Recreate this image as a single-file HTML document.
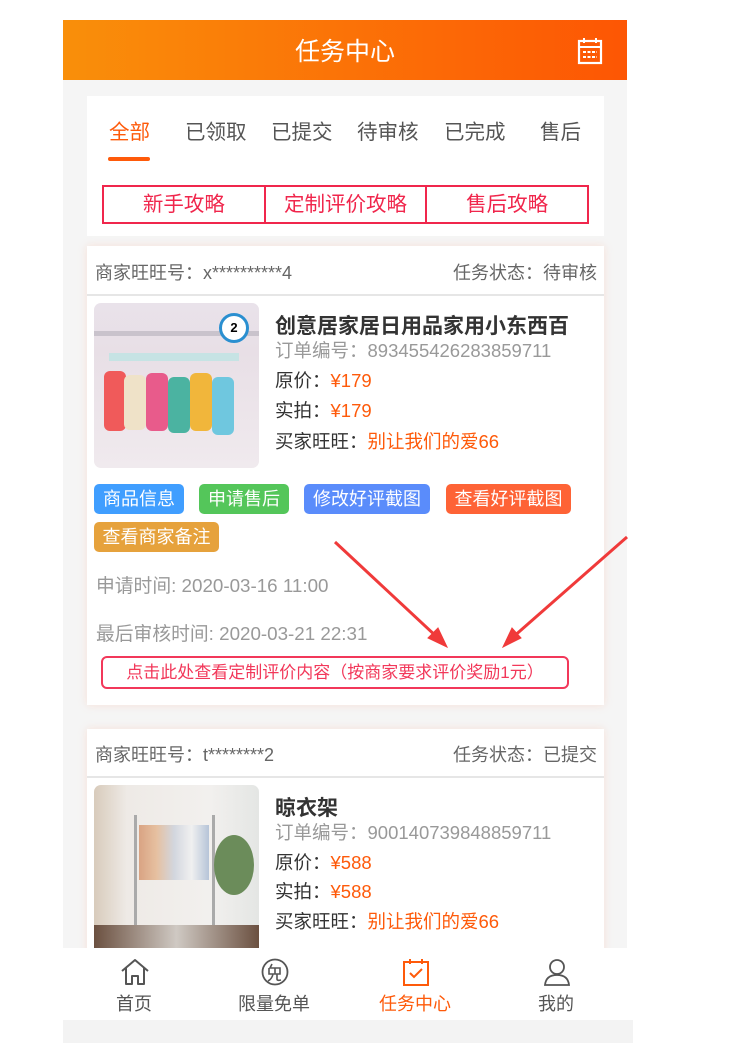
<!DOCTYPE html>
<html><head><meta charset="utf-8"><style>
*{margin:0;padding:0;box-sizing:border-box}
body{width:737px;height:1043px;background:#fff;position:relative;overflow:hidden;font-family:"Liberation Sans","Noto Sans CJK SC",sans-serif}
.a{position:absolute;white-space:nowrap}
.phone{position:absolute;left:63px;top:20px;width:564px;height:1023px;background:#f5f5f5}
.hdr{position:absolute;left:63px;top:20px;width:564px;height:60px;background:linear-gradient(90deg,#f98f0a,#fd5604)}
.card{position:absolute;left:87px;width:517px;background:#fff;box-shadow:0 0 8px rgba(250,200,180,.45)}
.btn{position:absolute;height:30px;line-height:30px;color:#fff;font-size:18px;border-radius:5px;text-align:center}
.t{font-size:18px;color:#666}
.l{font-size:18.5px;color:#333}
.g{color:#999}.o{color:#fe5a0a}
</style></head><body>
<div class="phone"></div>
<div class="a" style="left:63px;top:1020px;width:570px;height:23px;background:#f3f3f3"></div>
<div class="hdr"></div>
<div class="a" style="left:63px;top:32px;width:564px;text-align:center;color:#fff;font-size:25px">任务中心</div>
<svg class="a" style="left:577px;top:37px" width="26" height="28" viewBox="0 0 26 28"><rect x="2" y="4" width="22" height="22" fill="none" stroke="#fff" stroke-width="2.2"/><line x1="2" y1="10" x2="24" y2="10" stroke="#fff" stroke-width="2"/><line x1="7" y1="1" x2="7" y2="6" stroke="#fff" stroke-width="2"/><line x1="19" y1="1" x2="19" y2="6" stroke="#fff" stroke-width="2"/><line x1="6" y1="15" x2="20" y2="15" stroke="#fff" stroke-width="2" stroke-dasharray="3 1.5"/><line x1="6" y1="20" x2="20" y2="20" stroke="#fff" stroke-width="2" stroke-dasharray="3 1.5"/></svg>

<div class="a" style="left:87px;top:96px;width:517px;height:140px;background:#fff"></div>
<div class="a" style="top:115px;left:109px;font-size:20.5px;color:#fe5a0a">全部</div>
<div class="a" style="top:115px;left:185px;font-size:20.5px;color:#555">已领取</div>
<div class="a" style="top:115px;left:271px;font-size:20.5px;color:#555">已提交</div>
<div class="a" style="top:115px;left:357px;font-size:20.5px;color:#555">待审核</div>
<div class="a" style="top:115px;left:444px;font-size:20.5px;color:#555">已完成</div>
<div class="a" style="top:115px;left:540px;font-size:20.5px;color:#555">售后</div>
<div class="a" style="left:108px;top:157px;width:42px;height:4px;border-radius:2px;background:#fe5a0a"></div>
<div class="a" style="left:102px;top:185px;width:487px;height:39px;border:2px solid #f0264c;display:flex">
<div style="flex:1;text-align:center;line-height:35px;font-size:20.5px;color:#f0264c;border-right:2px solid #f0264c">新手攻略</div>
<div style="flex:1;text-align:center;line-height:35px;font-size:20.5px;color:#f0264c;border-right:2px solid #f0264c">定制评价攻略</div>
<div style="flex:1;text-align:center;line-height:35px;font-size:20.5px;color:#f0264c">售后攻略</div></div>

<div class="card" style="top:246px;height:459px"></div>
<div class="a t" style="left:95px;top:259px">商家旺旺号：x**********4</div>
<div class="a t" style="left:453px;top:259px">任务状态：待审核</div>
<div class="a" style="left:87px;top:294px;width:517px;height:2px;background:#e6e6e6"></div>
<div class="a" style="left:94px;top:303px;width:165px;height:165px;border-radius:7px;overflow:hidden;background:linear-gradient(180deg,#e9e2ea 0%,#e8dfe6 30%,#f0eaee 100%)">
<div class="a" style="left:0;top:28px;width:165px;height:5px;background:#c9c3cc"></div>
<div class="a" style="left:15px;top:50px;width:130px;height:8px;background:#c6e3e4"></div>
<div class="a" style="left:10px;top:68px;width:22px;height:60px;background:#f05a5a;border-radius:6px"></div>
<div class="a" style="left:30px;top:72px;width:22px;height:55px;background:#efe2c8;border-radius:6px"></div>
<div class="a" style="left:52px;top:70px;width:22px;height:58px;background:#e85b8b;border-radius:6px"></div>
<div class="a" style="left:74px;top:74px;width:22px;height:56px;background:#4bb3a1;border-radius:6px"></div>
<div class="a" style="left:96px;top:70px;width:22px;height:58px;background:#f1b63b;border-radius:6px"></div>
<div class="a" style="left:118px;top:74px;width:22px;height:58px;background:#6fc7df;border-radius:6px"></div>
<div class="a" style="left:125px;top:10px;width:30px;height:30px;border-radius:50%;border:3px solid #2a8fd0;background:#fff;font-size:13px;font-weight:bold;text-align:center;line-height:24px">2</div>
</div>
<div class="a" style="left:275px;top:310px;font-size:21px;font-weight:bold;color:#333">创意居家居日用品家用小东西百</div>
<div class="a l g" style="left:275px;top:337px">订单编号：893455426283859711</div>
<div class="a l" style="left:275px;top:367px">原价：<span class="o">¥179</span></div>
<div class="a l" style="left:275px;top:397px">实拍：<span class="o">¥179</span></div>
<div class="a l" style="left:275px;top:428px">买家旺旺：<span class="o">别让我们的爱66</span></div>
<div class="btn" style="left:94px;top:484px;width:90px;background:#409eff">商品信息</div>
<div class="btn" style="left:199px;top:484px;width:90px;background:#54c65a">申请售后</div>
<div class="btn" style="left:304px;top:484px;width:126px;background:#5a8cfb">修改好评截图</div>
<div class="btn" style="left:446px;top:484px;width:125px;background:#fe6336">查看好评截图</div>
<div class="btn" style="left:94px;top:522px;width:125px;background:#e6a23c">查看商家备注</div>
<div class="a t g" style="left:96px;top:571px;font-size:18.8px">申请时间: 2020-03-16 11:00</div>
<div class="a t g" style="left:96px;top:619px;font-size:18.8px">最后审核时间: 2020-03-21 22:31</div>
<div class="a" style="left:101px;top:656px;width:468px;height:33px;border:2px solid #f2385a;border-radius:6px;text-align:center;line-height:29px;font-size:17px;color:#f2385a">点击此处查看定制评价内容（按商家要求评价奖励1元）</div>

<div class="card" style="top:729px;height:230px"></div>
<div class="a t" style="left:95px;top:741px">商家旺旺号：t********2</div>
<div class="a t" style="left:453px;top:741px">任务状态：已提交</div>
<div class="a" style="left:87px;top:776px;width:517px;height:2px;background:#e6e6e6"></div>
<div class="a" style="left:94px;top:785px;width:165px;height:170px;border-radius:7px;overflow:hidden;background:linear-gradient(90deg,#d8cbbb 0%,#eeeae6 20%,#f2f0ee 70%,#e4e6e4 100%)">
<div class="a" style="left:40px;top:30px;width:3px;height:120px;background:#aaa"></div>
<div class="a" style="left:118px;top:30px;width:3px;height:120px;background:#aaa"></div>
<div class="a" style="left:45px;top:40px;width:70px;height:55px;background:linear-gradient(90deg,#d9a383,#e6c0a0,#d2d6de,#f0f0f0,#b6c4d8)"></div>
<div class="a" style="left:120px;top:50px;width:40px;height:60px;background:#6b8c5a;border-radius:50%"></div>
<div class="a" style="left:0;top:140px;width:165px;height:30px;background:linear-gradient(90deg,#6b5040,#cfc9c3,#6b5040)"></div>
</div>
<div class="a" style="left:275px;top:792px;font-size:21px;font-weight:bold;color:#333">晾衣架</div>
<div class="a l g" style="left:275px;top:819px">订单编号：900140739848859711</div>
<div class="a l" style="left:275px;top:849px">原价：<span class="o">¥588</span></div>
<div class="a l" style="left:275px;top:878px">实拍：<span class="o">¥588</span></div>
<div class="a l" style="left:275px;top:908px">买家旺旺：<span class="o">别让我们的爱66</span></div>

<svg class="a" style="left:0;top:0" width="737" height="1043"><g fill="#f03a3a" stroke="#f03a3a"><line x1="335" y1="542" x2="438" y2="638" stroke-width="3"/><polygon points="447,647 428,638 438,628"/><line x1="627" y1="537" x2="512" y2="638" stroke-width="3"/><polygon points="503,647 512,628 521,638"/></g></svg>

<div class="a" style="left:63px;top:948px;width:564px;height:72px;background:#fff"></div>
<svg class="a" style="left:120px;top:958px" width="30" height="28" viewBox="0 0 30 28"><path d="M2 13 L15 2 L28 13 M6 10 V26 H12 V18 H18 V26 H24 V10" fill="none" stroke="#555" stroke-width="2" stroke-linejoin="round"/></svg>
<svg class="a" style="left:261px;top:958px" width="28" height="28" viewBox="0 0 28 28"><circle cx="14" cy="14" r="12.5" fill="none" stroke="#555" stroke-width="1.8"/><path d="M11 6 L9 10 H19 V16 H8 V10 M14 10 V16 M12 16 Q11 21 7 23 M16 16 V21 Q16 23 20 22" fill="none" stroke="#555" stroke-width="1.6"/></svg>
<svg class="a" style="left:402px;top:958px" width="28" height="28" viewBox="0 0 28 28"><rect x="2" y="4" width="24" height="23" fill="none" stroke="#fe5a0a" stroke-width="2"/><path d="M8 1 V6 M20 1 V6 M12 4 H16" stroke="#fe5a0a" stroke-width="2"/><path d="M8 15 L12 19 L20 11" fill="none" stroke="#fe5a0a" stroke-width="2"/></svg>
<svg class="a" style="left:543px;top:958px" width="28" height="28" viewBox="0 0 28 28"><circle cx="14" cy="9" r="7" fill="none" stroke="#555" stroke-width="1.8"/><path d="M2 27 Q3 17 14 17 Q25 17 26 27 Z" fill="none" stroke="#555" stroke-width="1.8"/></svg>
<div class="a" style="left:104px;top:990px;width:60px;text-align:center;font-size:18px;color:#555">首页</div>
<div class="a" style="left:224px;top:990px;width:100px;text-align:center;font-size:18px;color:#555">限量免单</div>
<div class="a" style="left:365px;top:990px;width:100px;text-align:center;font-size:18px;color:#fe5a0a">任务中心</div>
<div class="a" style="left:526px;top:990px;width:60px;text-align:center;font-size:18px;color:#555">我的</div>
</body></html>
